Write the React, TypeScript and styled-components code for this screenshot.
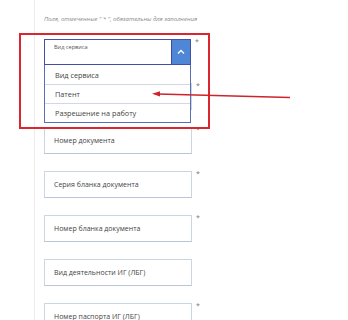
import React from 'react';
import styled, { createGlobalStyle } from 'styled-components';

const GlobalStyle = createGlobalStyle`
  html, body { margin: 0; padding: 0; background: #fff; }
  body { font-family: "Open Sans", "Liberation Sans", sans-serif; color: #4a4a4a; }
`;

const Page = styled.div`
  position: relative;
  width: 348px;
  height: 320px;
  overflow: hidden;
  display: flex;
`;

const Gutter = styled.div`
  width: 34px;
  flex: none;
`;

const Panel = styled.div`
  flex: 1;
  border-left: 1px solid #ececec;
  padding: 14px 0 0 9px;
`;

const Hint = styled.p`
  margin: 0 0 15px;
  font-size: 6px;
  line-height: 10px;
  font-style: italic;
  color: #8a8a8a;
  white-space: nowrap;
`;

const Row = styled.div`
  position: relative;
  display: flex;
  align-items: flex-start;
  height: 44px;
`;

const Star = styled.span`
  margin-left: 4px;
  margin-top: -1px;
  font-size: 7px;
  line-height: 8px;
  color: #777;
`;

const Field = styled.div`
  box-sizing: border-box;
  width: 148px;
  height: 27px;
  border: 1px solid #cbd6e3;
  border-bottom-color: #b8c6d8;
  display: flex;
  align-items: center;
  padding-left: 9px;
  font-size: 7px;
  color: #444;
  white-space: nowrap;
`;

const Select = styled.div`
  box-sizing: border-box;
  position: relative;
  width: 147px;
  height: 26px;
  border: 1px solid #4350a8;
  display: flex;
`;

const SelectLabel = styled.span`
  flex: 1;
  padding: 4px 0 0 9px;
  font-size: 5.6px;
  line-height: 7px;
  color: #555;
`;

const SelectButton = styled.div`
  width: 18px;
  height: 100%;
  background: #5086d6;
  border-left: 1px solid #3a49a2;
  display: flex;
  align-items: center;
  justify-content: center;
`;

const Options = styled.ul`
  position: absolute;
  left: -1px;
  top: 25px;
  width: 147px;
  box-sizing: border-box;
  margin: 0;
  padding: 0;
  list-style: none;
  background: #fff;
  border: 1px solid #5a6fb3;
  border-top: none;
  z-index: 2;
`;

const Option = styled.li<{ $first?: boolean }>`
  height: 19px;
  box-sizing: border-box;
  display: flex;
  align-items: center;
  padding-left: 10px;
  font-size: 7.3px;
  color: #444;
  border-top: ${(p) => (p.$first ? 'none' : '1px solid #d3d9e2')};
  white-space: nowrap;
`;

const Highlight = styled.div`
  position: absolute;
  left: 19px;
  top: 33px;
  width: 191px;
  height: 96px;
  box-sizing: border-box;
  border: 2px solid #d9262f;
  z-index: 3;
  pointer-events: none;
`;

const Arrow = styled.svg`
  position: absolute;
  left: 0;
  top: 0;
  z-index: 4;
`;

const fields = [
  { label: '', star: true },
  { label: 'Номер документа', star: true },
  { label: 'Серия бланка документа', star: true },
  { label: 'Номер бланка документа', star: true },
  { label: 'Вид деятельности ИГ (ЛБГ)', star: false },
  { label: 'Номер паспорта ИГ (ЛБГ)', star: true },
];

export default function App() {
  return (
    <>
      <GlobalStyle />
      <Page>
        <Gutter />
        <Panel>
          <Hint>Поля, отмеченные " * ", обязательны для заполнения</Hint>
          <Row>
            <Select>
              <SelectLabel>Вид сервиса</SelectLabel>
              <SelectButton>
                <svg width="8" height="6" viewBox="0 0 8 6">
                  <path d="M1 4.5 L4 1.5 L7 4.5" fill="none" stroke="#fff" strokeWidth="1.3" />
                </svg>
              </SelectButton>
              <Options>
                <Option $first>Вид сервиса</Option>
                <Option>Патент</Option>
                <Option>Разрешение на работу</Option>
              </Options>
            </Select>
            <Star>*</Star>
          </Row>
          {fields.map((f, i) => (
            <Row key={i}>
              <Field>{f.label}</Field>
              {f.star && <Star>*</Star>}
            </Row>
          ))}
        </Panel>
        <Highlight />
        <Arrow width="348" height="320" viewBox="0 0 348 320">
          <path d="M290 97.5 L158 94" stroke="#cf232b" strokeWidth="1.6" fill="none" />
          <path d="M152 93.8 L160 91.2 L160 96.6 Z" fill="#cf232b" />
        </Arrow>
      </Page>
    </>
  );
}
